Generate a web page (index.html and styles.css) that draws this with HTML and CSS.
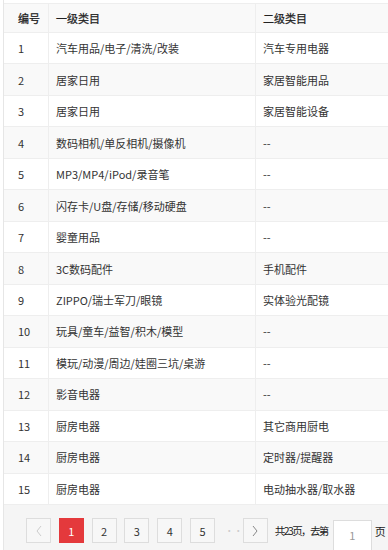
FILE: index.html
```html
<!DOCTYPE html>
<html lang="zh">
<head>
<meta charset="utf-8">
<link rel="stylesheet" href="styles.css">
</head>
<body>
<div class="wrap">
  <div class="table">
    <div class="row head">
      <div class="c c1">编号</div>
      <div class="c c2">一级类目</div>
      <div class="c c3">二级类目</div>
    </div>
    <div class="row"><div class="c c1">1</div><div class="c c2">汽车用品/电子/清洗/改装</div><div class="c c3">汽车专用电器</div></div>
    <div class="row alt"><div class="c c1">2</div><div class="c c2">居家日用</div><div class="c c3">家居智能用品</div></div>
    <div class="row"><div class="c c1">3</div><div class="c c2">居家日用</div><div class="c c3">家居智能设备</div></div>
    <div class="row alt"><div class="c c1">4</div><div class="c c2">数码相机/单反相机/摄像机</div><div class="c c3">--</div></div>
    <div class="row"><div class="c c1">5</div><div class="c c2">MP3/MP4/iPod/录音笔</div><div class="c c3">--</div></div>
    <div class="row alt"><div class="c c1">6</div><div class="c c2">闪存卡/U盘/存储/移动硬盘</div><div class="c c3">--</div></div>
    <div class="row"><div class="c c1">7</div><div class="c c2">婴童用品</div><div class="c c3">--</div></div>
    <div class="row alt"><div class="c c1">8</div><div class="c c2">3C数码配件</div><div class="c c3">手机配件</div></div>
    <div class="row"><div class="c c1">9</div><div class="c c2">ZIPPO/瑞士军刀/眼镜</div><div class="c c3">实体验光配镜</div></div>
    <div class="row alt"><div class="c c1">10</div><div class="c c2">玩具/童车/益智/积木/模型</div><div class="c c3">--</div></div>
    <div class="row"><div class="c c1">11</div><div class="c c2">模玩/动漫/周边/娃圈三坑/桌游</div><div class="c c3">--</div></div>
    <div class="row alt"><div class="c c1">12</div><div class="c c2">影音电器</div><div class="c c3">--</div></div>
    <div class="row"><div class="c c1">13</div><div class="c c2">厨房电器</div><div class="c c3">其它商用厨电</div></div>
    <div class="row alt"><div class="c c1">14</div><div class="c c2">厨房电器</div><div class="c c3">定时器/提醒器</div></div>
    <div class="row"><div class="c c1">15</div><div class="c c2">厨房电器</div><div class="c c3">电动抽水器/取水器</div></div>
  </div>
  <div class="pager">
    <span class="btn disabled"><svg width="8" height="12" viewBox="0 0 8 12"><path d="M6 1 L2 6 L6 11" fill="none" stroke="currentColor" stroke-width="1"/></svg></span>
    <span class="btn active">1</span>
    <span class="btn">2</span>
    <span class="btn">3</span>
    <span class="btn">4</span>
    <span class="btn">5</span>
    <span class="dots">···</span>
    <span class="btn next"><svg width="8" height="12" viewBox="0 0 8 12"><path d="M2 1 L6 6 L2 11" fill="none" stroke="currentColor" stroke-width="1"/></svg></span>
    <span class="total">共23页，去第</span>
    <span class="input">1</span>
    <span class="unit">页</span>
  </div>
</div>
</body>
</html>
```
FILE: styles.css
```css
html, body {
  margin: 0;
  padding: 0;
  background: #fff;
}
body {
  font-family: "Microsoft YaHei", "Noto Sans CJK SC", "Noto Sans", sans-serif;
  font-size: 11px;
  color: #333;
  width: 388px;
  height: 550px;
  overflow: hidden;
}
.wrap {
  margin-left: 3px;
  padding-top: 3px;
  border-left: 1px solid #e6e6e6;
  width: 385px;
}
.table {
  border-top: 1px solid #eee;
  border-right: 1px solid #eee;
}
.row {
  display: grid;
  grid-template-columns: 45px 207px 1fr;
  height: 31.47px;
  box-sizing: border-box;
  border-bottom: 1px solid #eee;
}
.row.head {
  height: 29px;
  background: #f9f9f9;
}
.row.alt {
  background: #f9f9f9;
}
.c {
  display: flex;
  align-items: center;
  white-space: nowrap;
  overflow: hidden;
}
.c1 {
  padding-left: 14px;
  border-right: 1px solid #eee;
}
.c2 {
  padding-left: 7px;
  border-right: 1px solid #eee;
}
.c3 {
  padding-left: 7px;
}
.head .c {
  color: #222;
  -webkit-text-stroke: 0.25px #222;
}
.pager {
  background: #f5f5f5;
  height: 46px;
  display: flex;
  align-items: flex-start;
  padding-left: 22px;
  padding-top: 13px;
  box-sizing: border-box;
  font-size: 11px;
  overflow: hidden;
}
.pager > * {
  flex-shrink: 0;
}
.btn {
  width: 25px;
  height: 25px;
  box-sizing: border-box;
  border: 1px solid #ddd;
  background: #f7f7f7;
  display: flex;
  align-items: center;
  justify-content: center;
  margin-right: 7.8px;
  color: #333;
}
.btn.disabled {
  color: #ccc;
}
.btn.active {
  background: #e4393c;
  border-color: #e4393c;
  color: #fff;
}
.btn.next {
  color: #888;
  margin-right: 7px;
}
.dots {
  width: 20px;
  height: 25px;
  display: flex;
  align-items: center;
  justify-content: flex-start;
  padding-left: 2px;
  box-sizing: border-box;
  color: #ccc;
  font-size: 9px;
}
.total {
  width: 56px;
  height: 25px;
  display: flex;
  align-items: center;
  white-space: nowrap;
  color: #222;
  font-size: 10.5px;
  letter-spacing: -1.6px;
}
.input {
  margin-left: 2px;
  margin-top: 2px;
  width: 39px;
  height: 32px;
  box-sizing: border-box;
  background: #fff;
  border: 1px solid #ddd;
  color: #999;
  display: flex;
  justify-content: center;
  padding-top: 6px;
}
.unit {
  margin-left: 3px;
  height: 25px;
  display: flex;
  align-items: center;
  color: #222;
}
```
